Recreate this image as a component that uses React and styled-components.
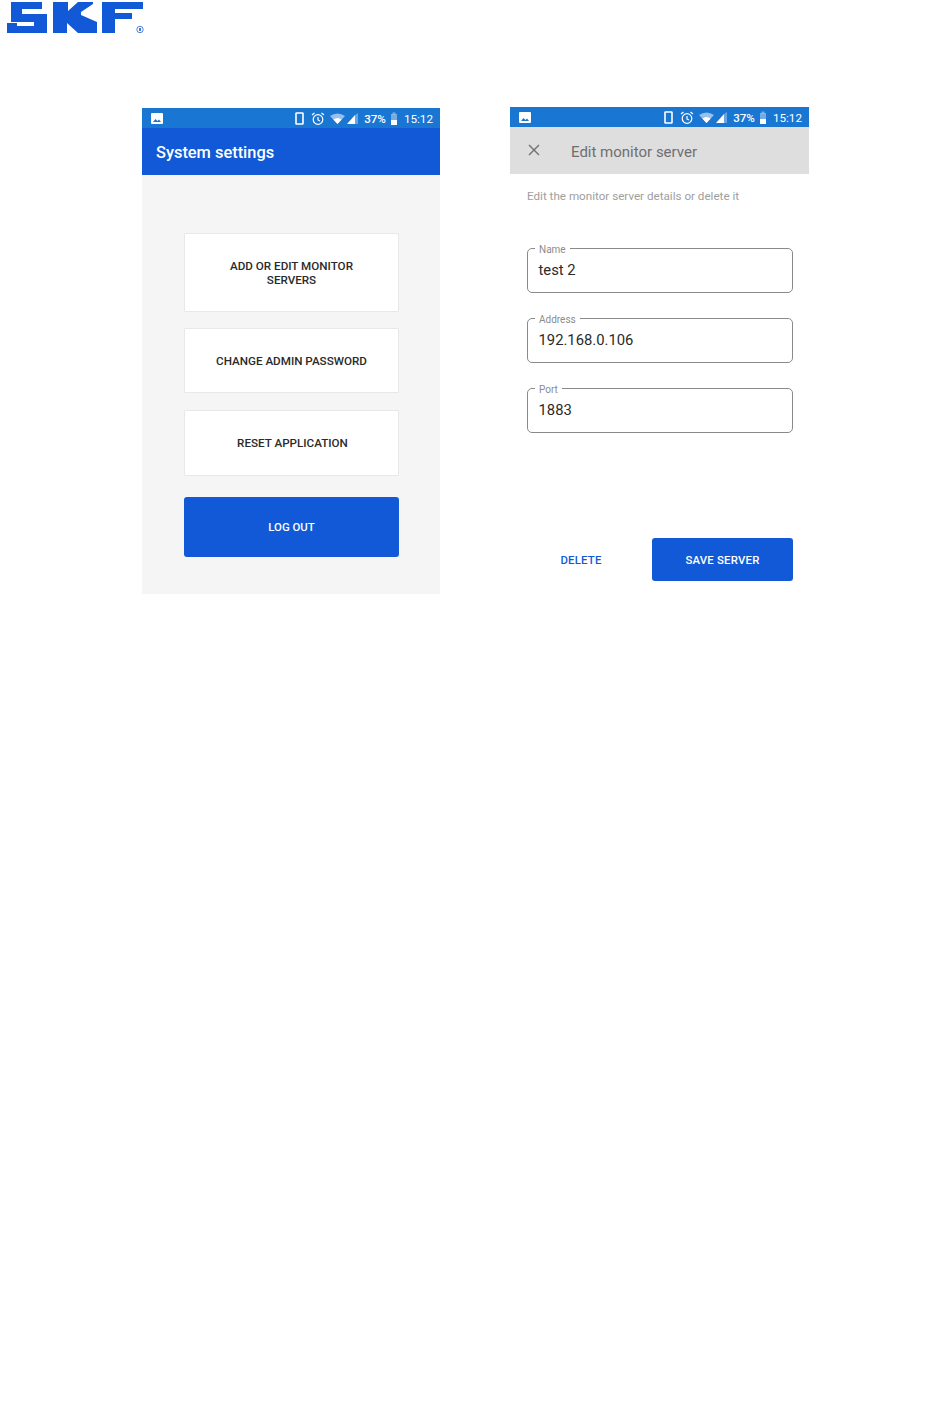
import React from "react";
import styled, { createGlobalStyle } from "styled-components";

const Global = createGlobalStyle`
  html, body { margin: 0; padding: 0; background: #fff; }
  body { font-family: Roboto, "Liberation Sans", sans-serif; }
`;
const Page = styled.div`width: 950px; height: 1409px; overflow: hidden;`;
const LogoBar = styled.header`height: 107px; padding: 2px 0 0 7px; box-sizing: border-box;`;
const Phones = styled.main`display: flex; align-items: flex-start; padding-left: 142px; gap: 70px;`;
const Phone = styled.section`
  width: ${(p) => p.$w}px; height: ${(p) => p.$h}px;
  margin-top: ${(p) => p.$top || 0}px;
  background: ${(p) => p.$bg};
  display: flex; flex-direction: column;
`;
const StatusBar = styled.div`
  height: 20px; box-sizing: border-box; flex: none; background: #1976d2; color: #fff;
  display: flex; align-items: center; padding: 1px 7px 0 9px;
  font-size: 11.6px; font-weight: 500;
`;
const StatusRight = styled.div`margin-left: auto; display: flex; align-items: center;`;
const Pct = styled.span`margin-left: 6px;`;
const Time = styled.span`margin-left: 6px; font-size: 11.7px; font-weight: 400;`;
const AppBar = styled.div`
  height: 47px; box-sizing: border-box; padding-top: 2px; flex: none; display: flex; align-items: center;
  background: ${(p) => p.$bg}; color: ${(p) => p.$fg};
  padding-left: ${(p) => p.$pl}px;
  font-size: ${(p) => p.$fs}px; font-weight: ${(p) => p.$fw};
`;
const CloseIcon = styled.svg`width: 14px; height: 14px; margin: -3px 30px 0 0; flex: none;`;
const Menu = styled.div`
  padding: 58px 41px 0 42px; display: flex; flex-direction: column;
`;
const MenuCard = styled.button`
  height: ${(p) => p.$h}px; margin-bottom: ${(p) => p.$mb}px; padding: 0 30px 0 ${(p) => p.$pl || 30}px;
  background: #fff; border: 1px solid #e8e8e8; border-radius: 1px;
  font: 500 11.65px/14px Roboto, sans-serif; color: #2a2a2a; text-transform: uppercase;
`;
const LogOut = styled.button`
  height: 60px; background: #1159d6; border: 0; border-radius: 3px; color: #fff;
  font: 500 11.4px/14px Roboto, sans-serif; text-transform: uppercase;
`;
const Hint = styled.p`
  margin: 15px 0 0 17px; font-size: 11.65px; line-height: 14px; color: #9e9e9e;
`;
const Fields = styled.div`
  margin: 39px 16px 0 17px; display: flex; flex-direction: column; gap: 19px;
`;
const Field = styled.fieldset`
  margin: 0; height: 51px; box-sizing: border-box; padding: 0 0 0 7px; min-width: 0;
  border: 1px solid #8a8a8a; border-radius: 5px;
`;
const FieldLabel = styled.legend`
  padding: 2px 4px 0; font-size: 10px; line-height: 11px; color: #8c8c8c;
`;
const FieldValue = styled.div`
  padding: 5px 0 0 3.5px; font-size: 14.8px; line-height: 20px; color: #2a2a2a;
`;
const Actions = styled.div`
  margin: 105px 16px 0 0; display: flex; justify-content: flex-end; align-items: center;
`;
const TextButton = styled.button`
  width: 142px; background: none; border: 0; padding: 0; color: #1159d6;
  font: 500 11.4px/14px Roboto, sans-serif; text-transform: uppercase; letter-spacing: 0.2px;
`;
const SaveButton = styled.button`
  width: 141px; height: 43px; background: #1159d6; border: 0; border-radius: 3px; color: #fff;
  font: 500 11.4px/14px Roboto, sans-serif; text-transform: uppercase; letter-spacing: 0.2px;
`;

const Logo = () => (
  <svg width="139" height="34" viewBox="0 0 139 34" fill="#1159d6" style={{ display: "block" }}>
    <path d="M4 0H35V7H15V12H40V31H0V21H10V24H27V20H4Z" />
    <path d="M46 0H61V9L71 0H86V2L74 10V13L90 20V31H71L60 21V31H46Z" />
    <path d="M95 0H136V7H108V11H125V17H108V31H95Z" />
    <circle cx="133" cy="27.5" r="3.2" fill="none" stroke="#3a70d8" strokeWidth="0.9" />
    <rect x="132.2" y="26" width="1.6" height="3" />
  </svg>
);

const Status = () => (
  <StatusBar>
    <svg width="12" height="11" viewBox="0 0 12 11"><rect width="12" height="11" rx="1" fill="#fff" /><path d="M2 9l2.5-3 2 2 1.5-1.5L10 9z" fill="#1976d2" /></svg>
    <StatusRight>
      <svg width="9" height="13" viewBox="0 0 9 13"><rect x="1" y="1" width="7" height="11" rx="0.6" fill="none" stroke="#fff" strokeWidth="1.6" /></svg>
      <svg width="14" height="14" viewBox="0 0 14 14" style={{ marginLeft: 7 }} fill="none" stroke="#fff" strokeWidth="1.2"><circle cx="7" cy="7.5" r="4.8" /><path d="M7 5v3l2 1M1 3l2.5-2M13 3l-2.5-2" /></svg>
      <svg width="15" height="11" viewBox="0 0 15 11" style={{ marginLeft: 5 }}><path d="M0 3Q7.5-2 15 3L7.5 11z" fill="#fff" opacity=".55" /><path d="M3.3 6.5Q7.5 3.5 11.7 6.5L7.5 11z" fill="#fff" /></svg>
      <svg width="11" height="11" viewBox="0 0 11 11" style={{ marginLeft: 2 }}><path d="M0 11L8 2V11z" fill="#fff" /><path d="M8 2L11 0V11H8z" fill="#fff" opacity=".35" /></svg>
      <Pct>37%</Pct>
      <svg width="8" height="13" viewBox="0 0 8 13" style={{ marginLeft: 4 }}><rect x="1" y="2" width="6" height="11" fill="#fff" opacity=".4" /><rect x="2.5" y="0.5" width="3" height="2" fill="#fff" opacity=".4" /><rect x="1" y="8" width="6" height="5" fill="#fff" /></svg>
      <Time>15:12</Time>
    </StatusRight>
  </StatusBar>
);

const FIELDS = [["Name", "test 2"], ["Address", "192.168.0.106"], ["Port", "1883"]];

export default function App() {
  return (
    <Page>
      <Global />
      <LogoBar><Logo /></LogoBar>
      <Phones>
        <Phone $w={298} $h={486} $top={1} $bg="#f5f5f5">
          <Status />
          <AppBar $bg="#1159d6" $fg="#fff" $pl={14} $fs={16.4} $fw={500}>System settings</AppBar>
          <Menu>
            <MenuCard $h={79} $mb={16}>Add or edit monitor servers</MenuCard>
            <MenuCard $h={65} $mb={17}>Change admin password</MenuCard>
            <MenuCard $h={66} $mb={21} $pl={32}>Reset application</MenuCard>
            <LogOut>Log out</LogOut>
          </Menu>
        </Phone>
        <Phone $w={299} $h={487} $bg="#fff">
          <Status />
          <AppBar $bg="#dedede" $fg="#6f6f6f" $pl={17} $fs={15} $fw={400}>
            <CloseIcon viewBox="0 0 14 14" fill="none" stroke="#6f6f6f" strokeWidth="1.4"><path d="M2 2l10 10M12 2L2 12" /></CloseIcon>
            Edit monitor server
          </AppBar>
          <Hint>Edit the monitor server details or delete it</Hint>
          <Fields>
            {FIELDS.map(([l, v]) => (
              <Field key={l}>
                <FieldLabel>{l}</FieldLabel>
                <FieldValue>{v}</FieldValue>
              </Field>
            ))}
          </Fields>
          <Actions>
            <TextButton>Delete</TextButton>
            <SaveButton>Save server</SaveButton>
          </Actions>
        </Phone>
      </Phones>
    </Page>
  );
}
